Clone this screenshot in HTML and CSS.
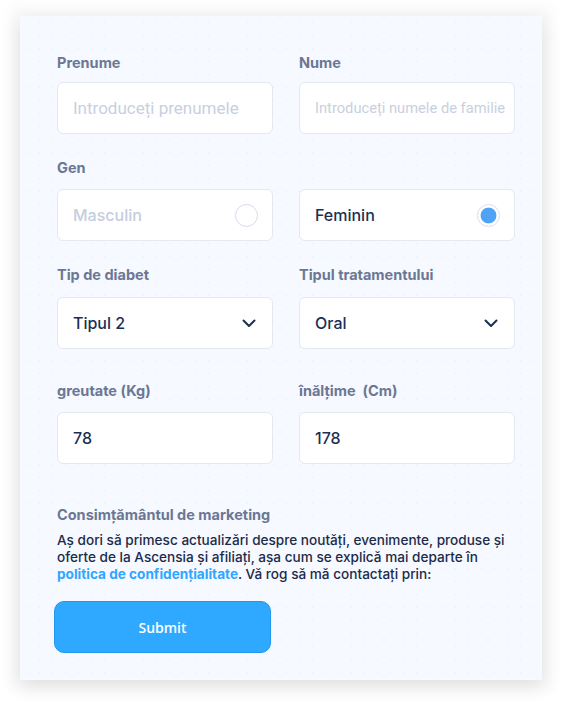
FILE: index.html
```html
<!DOCTYPE html>
<html lang="ro">
<head>
<meta charset="utf-8">
<title>Formular</title>
<link rel="stylesheet" href="styles.css">
</head>
<body>
<div class="card">
  <div class="row row-1">
    <div class="field">
      <div class="label">Prenume</div>
      <div class="box"><span class="ph ph-lg">Introduceți prenumele</span></div>
    </div>
    <div class="field">
      <div class="label">Nume</div>
      <div class="box"><span class="ph ph-sm">Introduceți numele de familie</span></div>
    </div>
  </div>

  <div class="row row-2">
    <div class="field">
      <div class="label">Gen</div>
      <div class="box box-split"><span class="value muted">Masculin</span><span class="radio"></span></div>
    </div>
    <div class="field">
      <div class="label label-empty">&nbsp;</div>
      <div class="box box-split"><span class="value">Feminin</span><span class="radio radio-on"></span></div>
    </div>
  </div>

  <div class="row row-3">
    <div class="field">
      <div class="label">Tip de diabet</div>
      <div class="box box-split"><span class="value">Tipul 2</span>
        <svg class="chev" width="14" height="9" viewBox="0 0 14 9"><path d="M1.5 1.5 L7 7 L12.5 1.5" fill="none" stroke="#1b2f52" stroke-width="2" stroke-linecap="round" stroke-linejoin="round"/></svg>
      </div>
    </div>
    <div class="field">
      <div class="label">Tipul tratamentului</div>
      <div class="box box-split"><span class="value">Oral</span>
        <svg class="chev" width="14" height="9" viewBox="0 0 14 9"><path d="M1.5 1.5 L7 7 L12.5 1.5" fill="none" stroke="#1b2f52" stroke-width="2" stroke-linecap="round" stroke-linejoin="round"/></svg>
      </div>
    </div>
  </div>

  <div class="row row-4">
    <div class="field">
      <div class="label">greutate (Kg)</div>
      <div class="box"><span class="value">78</span></div>
    </div>
    <div class="field">
      <div class="label">înălţime  (Cm)</div>
      <div class="box"><span class="value">178</span></div>
    </div>
  </div>

  <div class="consent">
    <div class="label">Consimțământul de marketing</div>
    <p class="consent-text">Aș dori să primesc actualizări despre noutăți, evenimente, produse și oferte de la Ascensia și afiliați, așa cum se explică mai departe în <a class="link">politica de confidențialitate</a>. Vă rog să mă contactați prin:</p>
  </div>

  <button class="submit">Submit</button>
</div>
</body>
</html>
```
FILE: styles.css
```css
* { box-sizing: border-box; }
html, body { margin: 0; padding: 0; background: #ffffff; }
body {
  width: 572px;
  height: 712px;
  overflow: hidden;
  font-family: Inter, "Noto Sans", sans-serif;
}
.card {
  margin: 16px 0 0 20px;
  width: 522px;
  height: 664px;
  background-color: #f6f9ff;
  background-image: radial-gradient(circle, rgba(200,210,230,0.35) 0.6px, transparent 1px);
  background-size: 13px 13px;
  box-shadow: 0 6px 18px rgba(0,0,0,0.10), 0 0 14px 10px rgba(0,0,0,0.03);
  padding: 38px 27px 0 37px;
}
.row {
  display: grid;
  grid-template-columns: 216px 216px;
  column-gap: 26px;
}
.row-2 { margin-top: 25px; }
.row-3 { margin-top: 25px; }
.row-4 { margin-top: 33px; }
.field { display: flex; flex-direction: column; gap: 11px; }
.row-2 .field, .row-4 .field { gap: 13px; }
.row-3 .field { gap: 14px; }
.label {
  font-size: 14.5px;
  line-height: 17px;
  font-weight: 700;
  color: #6b7794;
  white-space: pre;
}
.box {
  height: 52px;
  background: #ffffff;
  border: 1px solid #e3e8f1;
  border-radius: 6px;
  display: flex;
  align-items: center;
  padding: 0 15px 0 15px;
}
.box-split { justify-content: space-between; }
.ph {
  font-family: Roboto, "Noto Sans", sans-serif;
  color: #c8d0e0;
  white-space: nowrap;
}
.ph-lg { font-size: 17px; }
.ph-sm { font-size: 14.7px; }
.value {
  font-size: 16px;
  font-weight: 500;
  color: #1b2f52;
}
.muted { color: #c5cde0; }
.radio {
  width: 23px;
  height: 23px;
  border-radius: 50%;
  border: 1.5px solid #d5dbe8;
  background: #ffffff;
  margin-right: -1px;
}
.radio-on {
  background: radial-gradient(circle, #4ea3f5 0 7.5px, #ffffff 8.3px);
  border-color: #d9dee9;
}
.chev { margin-right: 1px; }
.consent { margin-top: 42px; }
.consent-text {
  margin: 9px 0 0 0;
  font-size: 13.6px;
  line-height: 17px;
  font-weight: 500;
  color: #1d2b4a;
  width: 450px;
}
.link { color: #2fa6ff; font-weight: 700; }
.submit {
  margin-top: 18px;
  margin-left: -3px;
  width: 217px;
  height: 52px;
  border-radius: 10px;
  background: #2fa8ff;
  border: 1px solid #2198f0;
  color: #ffffff;
  font-family: "Open Sans", sans-serif;
  font-weight: 600;
  font-size: 14px;
  display: block;
}
```
